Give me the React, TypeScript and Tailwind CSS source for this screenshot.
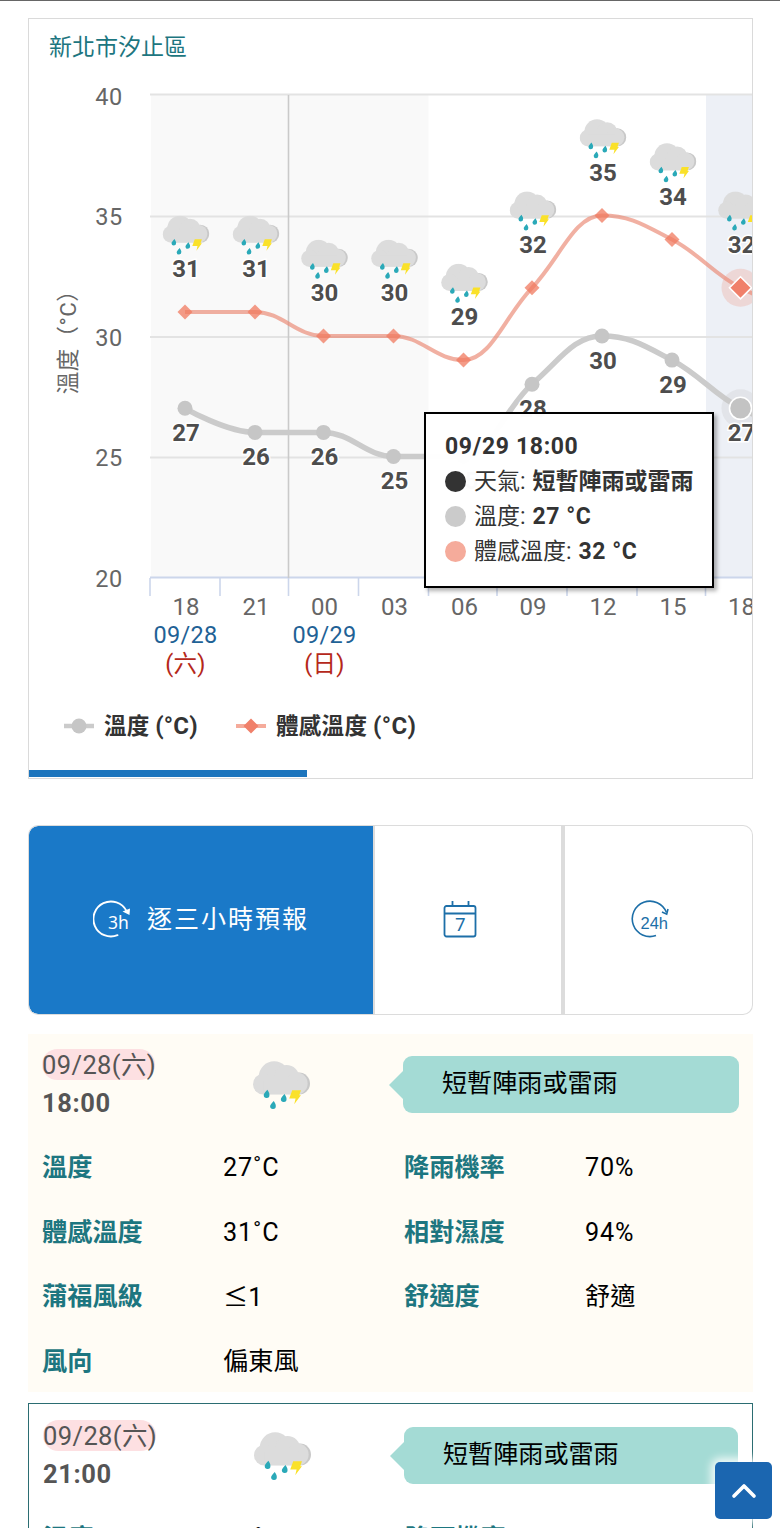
import { ChevronUp } from "lucide-react";

const BASE_FONT = "font-[Roboto,'Noto_Sans_CJK_TC',sans-serif]";

const slots = [
  { x: 185, hour: "18", temp: 27, feel: 31 },
  { x: 255, hour: "21", temp: 26, feel: 31 },
  { x: 323.5, hour: "00", temp: 26, feel: 30 },
  { x: 393.5, hour: "03", temp: 25, feel: 30 },
  { x: 463.5, hour: "06", temp: 25, feel: 29 },
  { x: 532, hour: "09", temp: 28, feel: 32 },
  { x: 602, hour: "12", temp: 30, feel: 35 },
  { x: 672, hour: "15", temp: 29, feel: 34 },
  { x: 740.5, hour: "18", temp: 27, feel: 32 },
  { x: 810, hour: "21", temp: 26, feel: 31 },
];

const ticks = [150, 220, 288.5, 358.5, 428.5, 497, 567, 637, 705.5];

const gridLines = [
  { value: 40, y: 94.5, labelY: 104.5 },
  { value: 35, y: 216.5, labelY: 224.5 },
  { value: 30, y: 337, labelY: 345.5 },
  { value: 25, y: 457.5, labelY: 465.5 },
  { value: 20, y: 577.5, labelY: 586.5 },
];

const dates = [
  { x: 185.5, date: "09/28", day: "(六)" },
  { x: 324.5, date: "09/29", day: "(日)" },
];

const toY = (value: number) => 336 + (30 - value) * 24.1;

type Point = { x: number; y: number };

// smooth line which never overshoots its neighbours
function spline(points: Point[]) {
  let d = `M${points[0].x} ${points[0].y}`;
  let prevX = points[0].x;
  let prevY = points[0].y;

  for (let i = 1; i < points.length; i++) {
    const p = points[i];
    const last = points[i - 1];
    const next = points[i + 1];
    let leftX = p.x;
    let leftY = p.y;
    let rightX = p.x;
    let rightY = p.y;

    if (next) {
      leftX = (1.5 * p.x + last.x) / 2.5;
      leftY = (1.5 * p.y + last.y) / 2.5;
      rightX = (1.5 * p.x + next.x) / 2.5;
      rightY = (1.5 * p.y + next.y) / 2.5;
      const fix = ((rightY - leftY) * (rightX - p.x)) / (rightX - leftX) + p.y - rightY;
      leftY += fix;
      rightY += fix;

      const clampedLeft = Math.min(Math.max(leftY, Math.min(last.y, p.y)), Math.max(last.y, p.y));
      if (clampedLeft !== leftY) {
        leftY = clampedLeft;
        rightY = 2 * p.y - leftY;
      }
      const clampedRight = Math.min(Math.max(rightY, Math.min(next.y, p.y)), Math.max(next.y, p.y));
      if (clampedRight !== rightY) {
        rightY = clampedRight;
        leftY = 2 * p.y - rightY;
      }
    }

    d += ` C${prevX} ${prevY} ${leftX} ${leftY} ${p.x} ${p.y}`;
    prevX = rightX;
    prevY = rightY;
  }
  return d;
}

function WeatherIcon(props: React.SVGProps<SVGSVGElement>) {
  return (
    <svg viewBox="40 32 170 146" {...props}>
      <circle cx="177" cy="99" r="33" fill="#c9c9c9" />
      <g fill="#dcdcdc">
        <circle cx="103" cy="79" r="46" />
        <circle cx="71" cy="101" r="31" />
        <circle cx="140" cy="82" r="38" />
        <circle cx="170" cy="99" r="33" />
        <rect x="70" y="90" width="102" height="42" />
      </g>
      <g fill="#2aa9b8">
        <path d="M83 118c5 8 6 11 6 15a8.500 8.500 0 0 1-17 1c0-5 5-9 11-16z" />
        <path d="M134 130c5 8 6 11 6 15a8.500 8.500 0 0 1-17 1c0-5 5-9 11-16z" />
        <path d="M102 151c5 8 6 11 6 15a8.500 8.500 0 0 1-17 1c0-5 5-9 11-16z" />
      </g>
      <path d="M157 119h26l-5 15h5l-20 27 4-17h-19z" fill="#fae129" />
    </svg>
  );
}

function Diamond({ x, y, r, className }: { x: number; y: number; r: number; className?: string }) {
  return <path d={`M${x} ${y - r}L${x + r} ${y}L${x} ${y + r}L${x - r} ${y}Z`} className={className} />;
}

function Chart() {
  const tempPoints = slots.map((s) => ({ x: s.x, y: toY(s.temp) }));
  const feelPoints = slots.map((s) => ({ x: s.x, y: toY(s.feel) }));
  const shown = slots.slice(0, 9);
  const active = slots[8];

  return (
    <svg viewBox="29 80 723 610" className="block w-[723px] h-[610px] shrink-0">
      <rect x="151" y="95" width="277.500" height="483" fill="#f9f9f9" />
      <rect x="706" y="95" width="50" height="483" fill="#edf0f6" />

      {gridLines.map((g) => (
        <g key={g.value}>
          <line x1="150" x2="752" y1={g.y} y2={g.y} stroke={g.value === 20 ? "#ccd6eb" : "#e3e3e3"} strokeWidth="1.800" />
          <text x="122.500" y={g.labelY} textAnchor="end" className="fill-[#666] text-[23.5px] tracking-[0.4px]">
            {g.value}
          </text>
        </g>
      ))}
      {ticks.map((x) => (
        <line key={x} x1={x} x2={x} y1="578" y2="596" stroke="#ccd6eb" strokeWidth="1.600" />
      ))}
      <line x1="288.500" x2="288.500" y1="95" y2="578" stroke="#cacaca" strokeWidth="1.600" />

      <text transform="translate(76 336.5) rotate(-90)" textAnchor="middle" className="fill-[#666] text-[22.500px] tracking-[0.4px]">
        溫度（°C）
      </text>

      {/* lines */}
      <path d={spline(tempPoints)} fill="none" stroke="#cbcbcb" strokeWidth="5.500" />
      <path d={spline(feelPoints)} fill="none" stroke="#e98670" strokeOpacity="0.650" strokeWidth="4" />

      {/* halo of the hovered slot */}
      <circle cx={active.x} cy={toY(active.temp)} r="19" fill="#cbcbcb" fillOpacity="0.300" />
      <circle cx={active.x} cy={toY(active.feel)} r="19" fill="#f08b76" fillOpacity="0.250" />

      {slots.slice(0, 8).map((s) => (
        <g key={s.x}>
          <circle cx={s.x} cy={toY(s.temp)} r="7.500" fill="#c6c6c6" />
          <Diamond x={s.x} y={toY(s.feel)} r={7.5} className="fill-[#f0795f]/75" />
        </g>
      ))}
      <circle cx={active.x} cy={toY(active.temp)} r="11" fill="#c3c3c3" stroke="#fff" strokeWidth="1.600" />
      <Diamond x={active.x} y={toY(active.feel)} r={11} className="fill-[#f0806a] stroke-white stroke-[1.6px]" />

      {/* values */}
      {shown.map((s) => (
        <g key={s.x} textAnchor="middle" className="fill-[#4d4d4d] font-bold text-[24px] tracking-[0.1px]">
          <WeatherIcon x={s.x - 22.5} y={toY(s.feel) - 96.5} width="47" height="40" />
          <text x={s.x + 1} y={toY(s.feel) - 35} className="stroke-white stroke-[3px] [paint-order:stroke]">
            {s.feel}
          </text>
          <text x={s.x + 1} y={toY(s.temp) + 32.5} className="stroke-white stroke-[3px] [paint-order:stroke]">
            {s.temp}
          </text>
          <text x={s.x + 1} y="614.500" className="fill-[#666] font-normal">
            {s.hour}
          </text>
        </g>
      ))}
      {dates.map((d) => (
        <g key={d.date} textAnchor="middle" className="text-[23.5px] tracking-[0.3px]">
          <text x={d.x} y="643" className="fill-[#1f6296]">
            {d.date}
          </text>
          <text x={d.x} y="671.500" className="fill-[#b5281a]">
            {d.day}
          </text>
        </g>
      ))}
    </svg>
  );
}

const tooltipRows = [
  { label: "天氣", value: "短暫陣雨或雷雨", dot: "bg-[#333]" },
  { label: "溫度", value: "27 °C", dot: "bg-[#cbcbcb]" },
  { label: "體感溫度", value: "32 °C", dot: "bg-[#f5ab9b]" },
];

function Tooltip() {
  return (
    <div className="absolute left-[395px] top-[393px] w-[290px] h-[176px] border-2 border-black bg-white/98 pl-[19px] pt-[15px] text-[23px] leading-[35px] text-[#333] shadow-[3px_3px_4px_rgba(0,0,0,0.3)] whitespace-nowrap">
      <p className="font-bold tracking-[0.65px]">09/29 18:00</p>
      {tooltipRows.map((row) => (
        <p key={row.label} className="flex items-center">
          <span className={`size-[21px] rounded-full mr-2 ${row.dot}`} />
          {row.label}:<b className={`ml-[7px] ${row.label === "天氣" ? "" : "tracking-[0.5px]"}`}>{row.value}</b>
        </p>
      ))}
    </div>
  );
}

function ChartCard() {
  return (
    <section className="relative h-[761px] border border-[#dadada]">
      <div className="h-full overflow-hidden flex flex-col">
        <h2 className="h-[61px] shrink-0 pt-[12px] pl-5 text-[23px] leading-[34px] text-[#1d7680]">新北市汐止區</h2>
        <Chart />
        <div className="flex items-center h-[34px] mt-[19px] pl-[35px] text-[22.500px] font-bold text-[#333]">
          <svg viewBox="0 0 30 16" className="w-[30px] h-4">
            <path d="M0 8h30" stroke="#cbcbcb" strokeWidth="4.500" />
            <circle cx="15" cy="8" r="7.500" fill="#c6c6c6" />
          </svg>
          <span className="ml-[10px] w-[132px] tracking-[0.2px]">
            溫度 <span className="text-[24px]">(°C)</span>
          </span>
          <svg viewBox="0 0 30 16" className="w-[30px] h-4">
            <path d="M0 8h30" stroke="#f5ab9b" strokeWidth="4" />
            <Diamond x={15} y={8} r={7.5} className="fill-[#f0806a]" />
          </svg>
          <span className="ml-[10px] tracking-[0.3px]">
            體感溫度 <span className="text-[24px]">(°C)</span>
          </span>
        </div>
        {/* scroll indicator */}
        <div className="mt-auto mb-px w-[278px] h-[7px] shrink-0 bg-[#1d75bd]" />
      </div>
      <Tooltip />
    </section>
  );
}

function Tabs() {
  return (
    <nav className="flex h-[190px] mt-[46px] text-[#1d6fa8]">
      <button className="w-[345px] flex items-center justify-center bg-[#1a79c8] border border-r-0 border-[#dcdcdc] bg-clip-padding rounded-l-[10px] text-white">
        <svg viewBox="0 0 38 40" className="w-[38px] h-10 mr-4" fill="none" stroke="currentColor" strokeWidth="1.900" strokeLinecap="round">
          <path d="M24.500 35.200A17.500 17.500 0 1 1 33.500 11" />
          <path d="M37 8.500l-.5 6.500-7-3.500z" fill="currentColor" stroke="none" />
          <text x="15" y="29" fill="currentColor" stroke="none" className="font-['Noto_Sans'] text-[17.500px]">
            3h
          </text>
        </svg>
        <span className="text-[25px] tracking-[2px]">逐三小時預報</span>
      </button>
      <button className="w-[190px] flex items-center justify-center border-y border-x-2 border-[#dcdcdc]">
        <svg viewBox="0 0 34 40" className="w-[34px] h-10 mr-4" fill="none" stroke="currentColor" strokeWidth="1.800">
          <rect x="1.500" y="6" width="31" height="30.500" rx="2" />
          <path d="M1.500 13.500h31M9.500 1v5M25.500 1v5" />
          <text x="12" y="31" fill="currentColor" stroke="none" className="font-['Noto_Sans'] text-[18.500px]">
            7
          </text>
        </svg>
      </button>
      <button className="flex-1 flex items-center justify-center border border-l-2 border-[#dcdcdc] rounded-r-[10px]">
        <svg viewBox="0 0 38 40" className="w-[38px] h-10 mr-[17px]" fill="none" stroke="currentColor" strokeWidth="1.600">
          <path d="M25 35.500A17.700 17.700 0 1 1 35.500 12.500" />
          <path d="M31 12l4.700 2.200L37 9" />
          <text x="9.500" y="29" fill="currentColor" stroke="none" className="font-['Liberation_Sans'] text-[16.500px]">
            24h
          </text>
        </svg>
      </button>
    </nav>
  );
}

type Forecast = {
  time: string;
  rows: [string, string, string, string][];
};

const forecasts: Forecast[] = [
  {
    time: "18:00",
    rows: [
      ["溫度", "27˚C", "降雨機率", "70%"],
      ["體感溫度", "31˚C", "相對濕度", "94%"],
      ["蒲福風級", "≤1", "舒適度", "舒適"],
      ["風向", "偏東風", "", ""],
    ],
  },
  {
    time: "21:00",
    rows: [
      ["溫度", "26˚C", "降雨機率", "70%"],
      ["體感溫度", "31˚C", "相對濕度", "95%"],
    ],
  },
];

function ForecastCard({ item, className }: { item: Forecast; className: string }) {
  return (
    <article className={`px-3.5 ${className}`}>
      <div className="flex h-[101px] pt-[15px] text-[25.500px]">
        <div className="w-[211px] shrink-0 text-[#555]">
          <p className="w-[113px] h-[31px] rounded-full bg-[#fde0e2] leading-[32px] tracking-[0.4px] whitespace-nowrap">
            09/28(六)
          </p>
          <p className="font-bold leading-[32px] mt-[7px] tracking-[0.6px]">{item.time}</p>
        </div>
        <WeatherIcon className="w-[57px] h-[49px] mt-[12px] shrink-0" />
        <div className="ml-[79px] mt-[7px] flex-1 flex h-[57px] items-center">
          <svg viewBox="0 0 15 30" className="w-[15px] h-[30px] -mr-px shrink-0">
            <path d="M0 15L15 0V30Z" fill="#a4dbd5" />
          </svg>
          <p className="flex-1 h-full pl-[39px] rounded-[9px] bg-[#a4dbd5] text-[25.100px] leading-[55px] text-black">
            短暫陣雨或雷雨
          </p>
        </div>
      </div>
      {item.rows.map((row) => (
        <div key={row[0]} className="grid grid-cols-[181px_181px_181px_1fr] h-[64.500px] items-center text-[25.200px] pt-[2px]">
          <b className="text-[#1d7680]">{row[0]}</b>
          <span className="text-black">
            {row[1] === "≤1" ? (
              <>
                <span className="font-['Noto_Sans_CJK_TC']">≤</span>1
              </>
            ) : (
              <span className={row[1].endsWith("C") ? "tracking-[0.8px]" : ""}>{row[1]}</span>
            )}
          </span>
          <b className="text-[#1d7680]">{row[2]}</b>
          <span className={`text-black ${row[3].endsWith("%") ? "tracking-[0.8px]" : ""}`}>{row[3]}</span>
        </div>
      ))}
    </article>
  );
}

export default function App() {
  return (
    <div className={`relative h-[1528px] w-[780px] overflow-hidden bg-white border-t border-[#666] ${BASE_FONT}`}>
      <main lang="zh-TW" className="pl-7 pr-[27px] pt-[17px]">
        <ChartCard />
        <Tabs />
        <ForecastCard item={forecasts[0]} className="mt-[19px] h-[358px] bg-[#fffcf5]" />
        <ForecastCard item={forecasts[1]} className="mt-[11px] border border-[#2b6d72] pt-px" />
      </main>
      <button className="absolute left-[715px] top-[1461px] size-[57px] rounded-[5px] bg-[#1b66b0] text-white flex items-center justify-center shadow-[0_0_8px_4px_rgba(255,255,255,0.85)]">
        <ChevronUp size={40} strokeWidth={2.2} />
      </button>
    </div>
  );
}
